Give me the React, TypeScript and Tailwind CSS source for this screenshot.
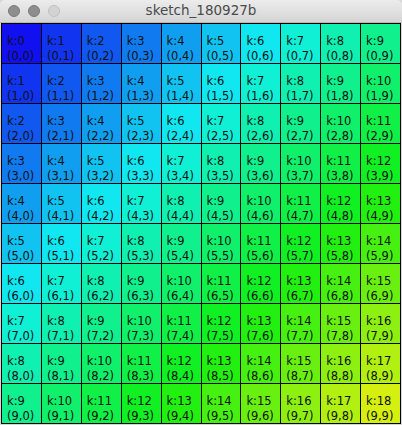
import React from 'react';

// hue runs from blue (k=0) toward yellow-green (k=18)
const cellColor = (k: number) => {
  const h = 240 - 9.6 * k;
  const s = 0.933;
  const v = 0.94;
  const f = (n: number) => {
    const kk = (n + h / 60) % 6;
    return v - v * s * Math.max(0, Math.min(kk, 4 - kk, 1));
  };
  const to = (x: number) => Math.round(x * 255).toString(16).padStart(2, '0');
  return `#${to(f(5))}${to(f(3))}${to(f(1))}`;
};

const rows = Array.from({ length: 10 }, (_, i) => i);
const cols = Array.from({ length: 10 }, (_, j) => j);

const TitleBar: React.FC = () => (
  <div className="relative h-[23px] rounded-t-[5px] bg-gradient-to-b from-[#ececec] to-[#d5d5d5] border-b border-[#b9b9b9] flex items-center justify-center">
    <div className="absolute left-[8px] top-[5px] flex gap-[8px]">
      <span className="w-[12px] h-[12px] rounded-full bg-[#8e8e8e] border border-[#7a7a7a]" />
      <span className="w-[12px] h-[12px] rounded-full bg-[#8e8e8e] border border-[#7a7a7a]" />
      <span className="w-[12px] h-[12px] rounded-full bg-[#d3d3d3] border border-[#c0c0c0]" />
    </div>
    <p className="text-[13.5px] text-[#4a4a4a] leading-none" style={{ fontFamily: '"DejaVu Sans", "Liberation Sans", sans-serif' }}>
      sketch_180927b
    </p>
  </div>
);

export default function App() {
  return (
    <div className="w-[402px] h-[425px] bg-[#d6d6d6] overflow-hidden">
      <TitleBar />
      <div className="mx-[1px] w-[400px] grid grid-cols-10 border-r border-b border-black" style={{ fontFamily: '"DejaVu Sans", "Liberation Sans", sans-serif' }}>
        {rows.map((i) =>
          cols.map((j) => (
            <div
              key={`${i}-${j}`}
              className="h-[40px] border-l border-t border-black pl-[5px] pt-[10px] text-[11.5px] leading-[14.5px] text-[#111] overflow-hidden whitespace-nowrap"
              style={{ backgroundColor: cellColor(i + j) }}
            >
              <p>k:{i + j}</p>
              <p>({i},{j})</p>
            </div>
          ))
        )}
      </div>
    </div>
  );
}
